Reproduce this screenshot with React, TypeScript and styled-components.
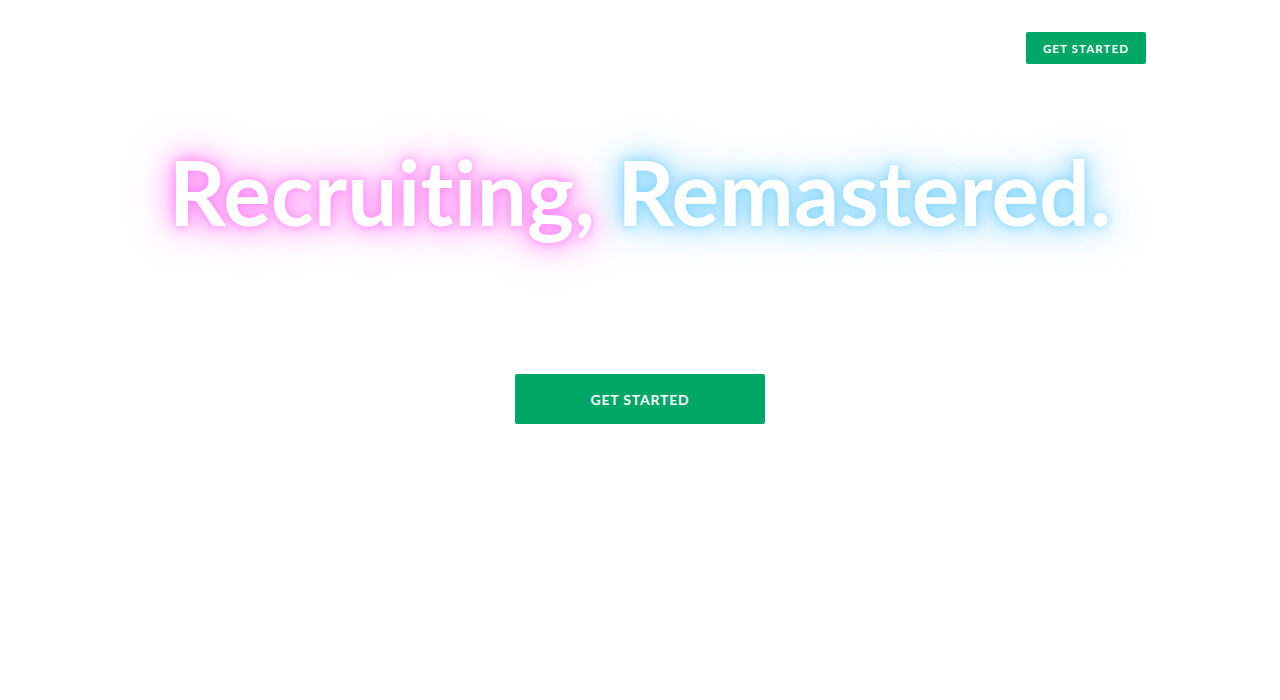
import React from "react";
import styled, { createGlobalStyle } from "styled-components";

const GlobalStyle = createGlobalStyle`
  html, body {
    margin: 0;
    padding: 0;
    background: #ffffff;
    font-family: Lato, "Open Sans", sans-serif;
  }
`;

const Page = styled.div`
  min-height: 700px;
  display: flex;
  flex-direction: column;
`;

const Header = styled.header`
  width: 1012px;
  margin: 0 auto;
  padding-top: 32px;
  display: flex;
  justify-content: flex-end;
`;

const GreenButton = styled.a<{ $size?: "sm" | "lg" }>`
  display: flex;
  align-items: center;
  justify-content: center;
  box-sizing: border-box;
  background: #00a666;
  color: #ffffff;
  border-radius: 2px;
  text-decoration: none;
  text-transform: uppercase;
  font-family: Lato, sans-serif;
  font-weight: 700;
  cursor: pointer;
  width: ${({ $size }) => ($size === "lg" ? "250px" : "120px")};
  height: ${({ $size }) => ($size === "lg" ? "50px" : "32px")};
  font-size: ${({ $size }) => ($size === "lg" ? "14px" : "11.5px")};
  letter-spacing: ${({ $size }) => ($size === "lg" ? "0.8px" : "1.1px")};
`;

const Hero = styled.section`
  display: flex;
  flex-direction: column;
  align-items: center;
  padding-top: 68px;
`;

const Headline = styled.h1`
  margin: 0;
  font-family: Lato, sans-serif;
  font-weight: 700;
  font-size: 89px;
  line-height: 120px;
  letter-spacing: 0.2px;
  color: #ffffff;
  white-space: nowrap;
`;

const Glow = styled.span<{ $color: string }>`
  text-shadow: 0 0 10px ${({ $color }) => $color}, 0 0 24px ${({ $color }) => $color},
    0 0 44px ${({ $color }) => $color};
`;

const CtaRow = styled.div`
  padding-top: 122px;
`;

export default function App() {
  return (
    <Page>
      <GlobalStyle />
      <Header>
        <GreenButton>Get Started</GreenButton>
      </Header>
      <Hero>
        <Headline>
          <Glow $color="rgba(255, 120, 245, 0.8)">Recruiting,</Glow>{" "}
          <Glow $color="rgba(120, 210, 255, 0.8)">Remastered.</Glow>
        </Headline>
        <CtaRow>
          <GreenButton $size="lg">Get Started</GreenButton>
        </CtaRow>
      </Hero>
    </Page>
  );
}
